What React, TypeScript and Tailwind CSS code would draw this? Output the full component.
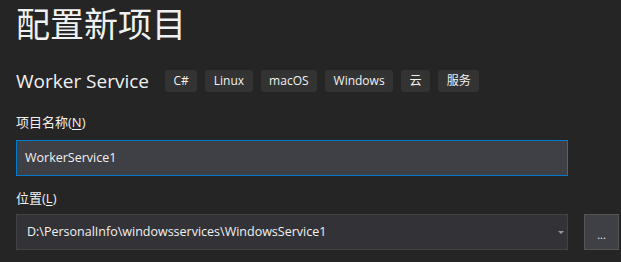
const tags = ["C#", "Linux", "macOS", "Windows", "云", "服务"];

export default function App() {
  return (
    <div
      className="w-[621px] h-[262px] overflow-hidden bg-[#252526] text-[#f1f1f1] pl-4"
      style={{ fontFamily: '"Open Sans", "Noto Sans CJK SC", sans-serif' }}
    >
      <h1 className="mt-1 text-[34px] leading-[40px] font-normal">配置新项目</h1>

      {/* template name + tags */}
      <div className="mt-[26px] flex items-center h-[22px]">
        <span className="text-[19px] leading-none">Worker Service</span>
        <div className="ml-4 flex gap-2">
          {tags.map((t) => (
            <span
              key={t}
              className="h-[22px] px-[8.5px] rounded-[3px] bg-[#333333] text-[12px] leading-[22px] text-[#f1f1f1]"
            >
              {t}
            </span>
          ))}
        </div>
      </div>

      {/* project name */}
      <div className="mt-5 text-[13px] leading-5">
        项目名称(<span className="underline underline-offset-2">N</span>)
      </div>
      <div className="mt-2 w-[552px] h-9 border border-[#007acc] bg-[#3f3f46] flex items-center px-2 text-[12.5px]">
        WorkerService1
      </div>

      {/* location */}
      <div className="mt-3 text-[13px] leading-5">
        位置(<span className="underline underline-offset-2">L</span>)
      </div>
      <div className="mt-[6px] flex">
        <div className="w-[552px] h-9 border border-[#434346] bg-[#333337] flex items-center pl-[10px] pr-[3px] text-[12.5px]">
          <span className="flex-1">D:\PersonalInfo\windowsservices\WindowsService1</span>
          <svg width="6" height="3" viewBox="0 0 6 3">
            <path d="M0 0h6L3 3z" fill="#999999" />
          </svg>
        </div>
        <button className="ml-4 w-[35px] h-9 border border-[#555555] bg-[#3f3f46] text-[11px] leading-none pt-[5px] text-[#f1f1f1]">
          ...
        </button>
      </div>
    </div>
  );
}
